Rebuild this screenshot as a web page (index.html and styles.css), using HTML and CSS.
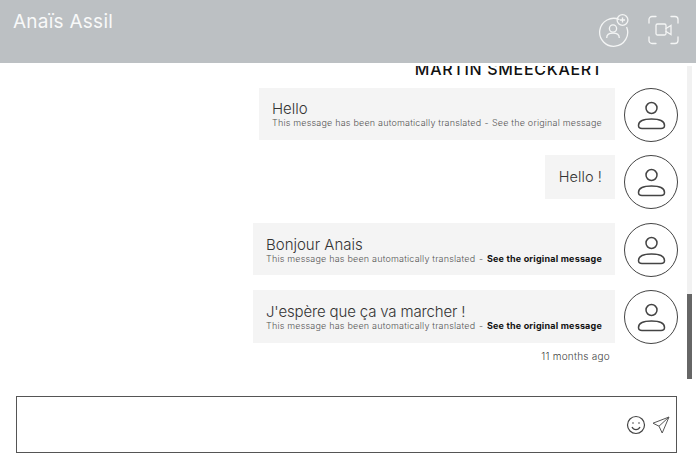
FILE: index.html
```html
<!DOCTYPE html>
<html lang="en">
<head>
<meta charset="utf-8">
<title>Chat</title>
<link rel="stylesheet" href="styles.css">
</head>
<body>
<div class="app">
  <header class="topbar">
    <h1 class="title">Anaïs Assil</h1>
    <div class="actions">
      <svg class="act" width="34" height="34" viewBox="0 0 34 34" fill="none" stroke="#f4f5f5" stroke-width="1.3"><path d="M22.5 6.6A14 14 0 1 0 29.6 14"/><circle cx="16" cy="15.5" r="3.6"/><path d="M9.7 25c0-3 2.5-4.8 6.3-4.8s6.3 1.8 6.3 4.8"/><circle cx="25.5" cy="7" r="5.4"/><path d="M25.5 4.5v5M23 7h5"/></svg>
      <svg class="act" width="31" height="30" viewBox="0 0 31 30" fill="none" stroke="#f4f5f5" stroke-width="1.3" stroke-linecap="round"><path d="M1 8V4.500a3 3 0 0 1 3-3h4M23 1.500h4a3 3 0 0 1 3 3V8M30 22v3.500a3 3 0 0 1-3 3h-4M8 28.500H4a3 3 0 0 1-3-3V22"/><rect x="8" y="9" width="10" height="11" rx="1.500"/><path d="M18 13.500l5-3v9l-5-3"/></svg>
    </div>
  </header>
  <div class="body">
    <main class="thread">
      <div class="sender">MARTIN SMEECKAERT</div>
      <div class="row">
        <div class="bubble b1"><div class="msg">Hello</div><div class="note">This message has been automatically translated<span class="sep">-</span>See the original message</div></div>
        <svg class="avatar" viewBox="0 0 54 54" fill="none" stroke="#444" stroke-width="1"><circle cx="27" cy="27" r="26.500"/><g stroke-width="1.500"><circle cx="27.500" cy="20" r="5.500"/><path d="M18 40.500h19c2 0 3.500-1 3.500-3 0-4-5-6.500-13-6.500s-13 2.500-13 6.500c0 2 1.500 3 3.500 3z"/></g></svg>
      </div>
      <div class="row row-wide">
        <div class="bubble b2"><div class="msg">Hello !</div></div>
        <svg class="avatar" viewBox="0 0 54 54" fill="none" stroke="#444" stroke-width="1"><circle cx="27" cy="27" r="26.500"/><g stroke-width="1.500"><circle cx="27.500" cy="20" r="5.500"/><path d="M18 40.500h19c2 0 3.500-1 3.500-3 0-4-5-6.500-13-6.500s-13 2.500-13 6.500c0 2 1.500 3 3.500 3z"/></g></svg>
      </div>
      <div class="row">
        <div class="bubble b3"><div class="msg">Bonjour Anais</div><div class="note">This message has been automatically translated<span class="sep">-</span><b class="orig">See the original message</b></div></div>
        <svg class="avatar" viewBox="0 0 54 54" fill="none" stroke="#444" stroke-width="1"><circle cx="27" cy="27" r="26.500"/><g stroke-width="1.500"><circle cx="27.500" cy="20" r="5.500"/><path d="M18 40.500h19c2 0 3.500-1 3.500-3 0-4-5-6.500-13-6.500s-13 2.500-13 6.500c0 2 1.500 3 3.500 3z"/></g></svg>
      </div>
      <div class="row">
        <div class="bubble b3 b4"><div class="msg msg-long">J'espère que ça va marcher !</div><div class="note">This message has been automatically translated<span class="sep">-</span><b class="orig">See the original message</b></div></div>
        <svg class="avatar" viewBox="0 0 54 54" fill="none" stroke="#444" stroke-width="1"><circle cx="27" cy="27" r="26.500"/><g stroke-width="1.500"><circle cx="27.500" cy="20" r="5.500"/><path d="M18 40.500h19c2 0 3.500-1 3.500-3 0-4-5-6.500-13-6.500s-13 2.500-13 6.500c0 2 1.500 3 3.500 3z"/></g></svg>
      </div>
      <div class="time">11 months ago</div>
    </main>
    <div class="track"><div class="thumb"></div></div>
  </div>
  <div class="composer">
    <div class="inputbox">
      <svg width="20" height="20" viewBox="0 0 20 20" fill="none" stroke="#444" stroke-width="1.200"><circle cx="10" cy="10" r="8.500"/><circle cx="7" cy="8" r=".8" fill="#444" stroke="none"/><circle cx="13" cy="8" r=".8" fill="#444" stroke="none"/><path d="M6 12c1 2 2.500 2.600 4 2.600s3-.6 4-2.600" stroke-width="1.300"/></svg>
      <svg width="18" height="18" viewBox="0 0 18 18" fill="none" stroke="#555" stroke-width="1"><path d="M17 1L1 7.200l6 3 3.200 6.800zM7 10.200L17 1"/></svg>
    </div>
  </div>
</div>
</body>
</html>
```
FILE: styles.css
```css
* { box-sizing: border-box; }
html, body { margin: 0; height: 100%; background: #fff; }
body { font-family: "Inter", "Liberation Sans", sans-serif; color: #333; overflow: hidden; }
.app { width: 696px; height: 464px; display: flex; flex-direction: column; }
.topbar { height: 63px; flex: none; background: #bcc0c3; display: flex; justify-content: space-between; align-items: flex-start; padding: 0 17px 0 13px; }
.title { margin: 10px 0 0; font-size: 19px; line-height: 24px; font-weight: 400; color: #f8f9f9; letter-spacing: .25px; }
.actions { display: flex; align-items: center; gap: 17px; padding-top: 13px; }
.body { flex: none; height: 316px; display: flex; padding-right: 4px; }
.thread { flex: 1; height: 313px; margin-top: 3px; overflow: hidden; display: flex; flex-direction: column; justify-content: flex-end; align-items: flex-end; padding: 0 9px 16px 0; }
.sender { flex: none; width: 100%; padding-right: 75px; text-align: right; font-size: 16px; line-height: 18px; font-weight: 500; letter-spacing: .7px; color: #111; margin-bottom: 10px; }
.row { flex: none; display: flex; align-items: flex-start; gap: 9px; margin-bottom: 13px; }
.row-wide { margin-bottom: 14px; }
.avatar { width: 54px; height: 54px; flex: none; }
.bubble { background: #f4f4f4; text-align: left; display: flex; flex-direction: column; justify-content: center; }
.b1 { width: 356px; height: 52px; padding: 1px 13px 0; }
.b2 { width: 70px; height: 44px; padding: 0 13px; text-align: right; }
.b3 { width: 362px; height: 52px; padding: 2px 13px 0; }
.b4 { height: 53px; }
.msg { font-size: 15px; line-height: 16px; font-weight: 300; color: #333; }
.msg-long { letter-spacing: -.15px; }
.b2 .msg { font-size: 14.500px; letter-spacing: .1px; }
.note { font-size: 9px; line-height: 11px; font-weight: 300; color: #555; letter-spacing: .19px; white-space: nowrap; display: flex; justify-content: space-between; }
.sep { margin: 0 3px; }
.orig { color: #111; font-weight: 700; letter-spacing: .2px; }
.time { flex: none; width: 100%; margin-top: -7px; padding-right: 68px; text-align: right; font-size: 10px; line-height: 13px; font-weight: 300; letter-spacing: .25px; color: #444; }
.track { width: 5px; height: 313px; margin-top: 3px; flex: none; background: #f1f1f1; display: flex; flex-direction: column; justify-content: flex-end; }
.thumb { height: 85px; background: #666; }
.composer { flex: 1; padding: 17px 19px 11px 16px; }
.inputbox { height: 57px; border: 1px solid #555; display: flex; align-items: center; justify-content: flex-end; gap: 6px; padding-right: 6px; }
```
